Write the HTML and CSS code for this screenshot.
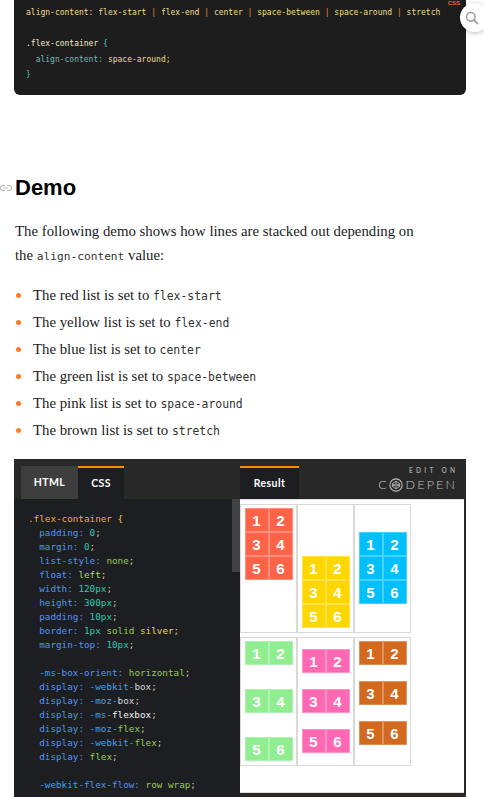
FILE: index.html
```
<!DOCTYPE html>
<html lang="en">
<head>
<meta charset="utf-8">
<title>align-content demo</title>
<link rel="stylesheet" href="styles.css">
</head>
<body>
<div class="code-block">
  <span class="lang">CSS</span>
<pre><span class="c1">align-content: flex-start <span class="bar">|</span> flex-end <span class="bar">|</span> center <span class="bar">|</span> space-between <span class="bar">|</span> space-around <span class="bar">|</span> stretch</span>

<span class="c2">.flex-container</span> <span class="c3">{</span>
  <span class="c3">align-content:</span> <span class="c1">space-around;</span>
<span class="c3">}</span></pre>
</div>
<div class="search">
  <svg width="14" height="14" viewBox="0 0 14 14"><circle cx="5.8" cy="5.8" r="4.3" fill="none" stroke="#a0a0a0" stroke-width="1.6"/><path d="M9 9l3.6 3.6" stroke="#a0a0a0" stroke-width="1.8" stroke-linecap="round"/></svg>
</div>

<h2 class="heading">
  <span class="anchor"><svg width="12" height="10" viewBox="0 0 12 10"><path d="M5 2.5H3a2.5 2.5 0 0 0 0 5h2M7 2.5h2a2.5 2.5 0 0 1 0 5H7M3.8 5h4.4" fill="none" stroke="#b5b5b5" stroke-width="1.1"/></svg></span>
  <span>Demo</span>
</h2>

<p class="intro"><span class="line">The following demo shows how lines are stacked out depending on</span> <span class="line">the <code>align-content</code> value:</span></p>

<ul class="points">
  <li><span>The red list is set to <code>flex-start</code></span></li>
  <li><span>The yellow list is set to <code>flex-end</code></span></li>
  <li><span>The blue list is set to <code>center</code></span></li>
  <li><span>The green list is set to <code>space-between</code></span></li>
  <li><span>The pink list is set to <code>space-around</code></span></li>
  <li><span>The brown list is set to <code>stretch</code></span></li>
</ul>

<div class="pen">
  <div class="pen-bar">
    <div class="tabs">
      <span class="tab tab-html">HTML</span>
      <span class="tab tab-on">CSS</span>
    </div>
    <div class="tabs tabs-right">
      <span class="tab tab-on tab-result">Result</span>
      <div class="brand">
        <span class="edit-on">EDIT ON</span>
        <span class="codepen">C<svg width="14" height="14" viewBox="0 0 24 24"><circle cx="12" cy="12" r="10.5" fill="none" stroke="#bdbdbd" stroke-width="1.8"/><path d="M12 5.5L5.8 9.6v4.8L12 18.5l6.2-4.1V9.6L12 5.5zM12 18.5v-4.3M18.2 9.6L12 14.2 5.8 9.6M5.8 14.4L12 9.8l6.2 4.6M12 5.5v4.3" fill="none" stroke="#bdbdbd" stroke-width="1.5" stroke-linejoin="round"/></svg>DEPEN</span>
      </div>
    </div>
  </div>
  <div class="pen-body">
    <div class="code-pane">
<pre><span class="s">.flex-container</span> <span class="b">{</span>
  <span class="p">padding:</span> <span class="n">0</span><span class="sc">;</span>
  <span class="p">margin:</span> <span class="n">0</span><span class="sc">;</span>
  <span class="p">list-style:</span> <span class="k">none</span><span class="sc">;</span>
  <span class="p">float:</span> <span class="k2">left</span><span class="sc">;</span>
  <span class="p">width:</span> <span class="n">120px</span><span class="sc">;</span>
  <span class="p">height:</span> <span class="n">300px</span><span class="sc">;</span>
  <span class="p">padding:</span> <span class="n">10px</span><span class="sc">;</span>
  <span class="p">border:</span> <span class="n">1px</span> <span class="k">solid</span> <span class="y">silver</span><span class="sc">;</span>
  <span class="p">margin-top:</span> <span class="n">10px</span><span class="sc">;</span>

  <span class="v">-ms</span><span class="p">-box-orient:</span> <span class="k">horizontal</span><span class="sc">;</span>
  <span class="p">display:</span> <span class="v">-webkit-</span><span class="g">box</span><span class="sc">;</span>
  <span class="p">display:</span> <span class="v">-moz-</span><span class="g">box</span><span class="sc">;</span>
  <span class="p">display:</span> <span class="v">-ms-</span><span class="w">flexbox</span><span class="sc">;</span>
  <span class="p">display:</span> <span class="v">-moz-</span><span class="k">flex</span><span class="sc">;</span>
  <span class="p">display:</span> <span class="v">-webkit-</span><span class="k">flex</span><span class="sc">;</span>
  <span class="p">display:</span> <span class="k">flex</span><span class="sc">;</span>

  <span class="v">-webkit</span><span class="p">-flex-flow:</span> <span class="k">row wrap</span><span class="sc">;</span></pre>
      <div class="track"><div class="thumb"></div></div>
    </div>
    <div class="result-pane">
      <ul class="fc red start"><li>1</li><li>2</li><li>3</li><li>4</li><li>5</li><li>6</li></ul>
      <ul class="fc yellow end"><li>1</li><li>2</li><li>3</li><li>4</li><li>5</li><li>6</li></ul>
      <ul class="fc blue center"><li>1</li><li>2</li><li>3</li><li>4</li><li>5</li><li>6</li></ul>
      <ul class="fc green between"><li>1</li><li>2</li><li>3</li><li>4</li><li>5</li><li>6</li></ul>
      <ul class="fc pink around"><li>1</li><li>2</li><li>3</li><li>4</li><li>5</li><li>6</li></ul>
      <ul class="fc brown stretch"><li>1</li><li>2</li><li>3</li><li>4</li><li>5</li><li>6</li></ul>
    </div>
  </div>
</div>
</body>
</html>
```
FILE: styles.css
```
* { box-sizing: border-box; margin: 0; padding: 0; }

body {
  width: 484px;
  background: #fff;
  color: #1a1a1a;
  font-family: "Liberation Serif", serif;
  position: relative;
  overflow: hidden;
}

/* top code snippet */
.code-block {
  position: relative;
  margin-left: 14px;
  width: 452px;
  height: 95px;
  background: #1d1d1d;
  border-radius: 0 0 6px 6px;
  padding: 5.25px 12px 0;
}
.code-block pre {
  font-family: "DejaVu Sans Mono", monospace;
  font-size: 8px;
  line-height: 15.5px;
  color: #f0dc90;
}
.code-block .c1 { color: #f0dc90; }
.code-block .bar { color: #f08a2c; }
.code-block .c2 { color: #f4ecc8; }
.code-block .c3 { color: #4ccbb4; }
.lang {
  position: absolute;
  right: 6px;
  top: 0;
  font-family: "Liberation Sans", sans-serif;
  font-size: 6px;
  line-height: 6px;
  font-weight: bold;
  color: #ff5a1f;
}
.search {
  position: absolute;
  left: 460px;
  top: 3px;
  width: 29px;
  height: 29px;
  border-radius: 50%;
  background: #fff;
  box-shadow: 0 1px 5px rgba(0, 0, 0, 0.25);
  display: flex;
  align-items: center;
  padding-left: 5px;
}

/* heading */
.heading {
  margin-top: 78px;
  display: flex;
  align-items: center;
  height: 30px;
  font-family: "Liberation Sans", sans-serif;
  font-size: 22px;
  font-weight: bold;
  color: #000;
}
.anchor {
  width: 15px;
  display: flex;
  align-items: center;
}

.intro {
  margin-top: 16px;
  margin-left: 15px;
  width: 415px;
  font-size: 14.8px;
  line-height: 24px;
}
.intro .line {
  white-space: nowrap;
}
.intro code {
  font-size: 11.2px;
}
code {
  font-family: "DejaVu Sans Mono", monospace;
  font-size: 11.4px;
  line-height: 1;
  color: #333;
}

.points {
  list-style: none;
  margin-top: 14.5px;
  margin-left: 15.5px;
}
.points li {
  display: flex;
  align-items: center;
  height: 27px;
  font-size: 14.8px;
  line-height: 27px;
}
.points li::before {
  content: "";
  width: 5px;
  height: 5px;
  border-radius: 50%;
  background: #ff7a21;
  margin-right: 12.5px;
  flex: none;
}

/* codepen embed */
.pen {
  margin-top: 15px;
  margin-left: 14px;
  width: 452px;
  background: #2b2724;
}
.pen-bar {
  display: grid;
  grid-template-columns: 226px 226px;
  height: 40px;
  background: #282828;
}
.tabs {
  display: flex;
  align-items: flex-end;
  padding-left: 7px;
}
.tabs-right {
  padding-left: 0;
  padding-right: 11px;
  justify-content: space-between;
}
.tab {
  height: 33px;
  display: flex;
  align-items: center;
  justify-content: center;
  font-family: Lato, "Liberation Sans", sans-serif;
  font-weight: 700;
  font-size: 10.5px;
  letter-spacing: 0.4px;
  color: #fff;
}
.tab-html {
  width: 57px;
  background: #3e3e3e;
}
.tab-on {
  width: 46px;
  background: #1d1e22;
  border-top: 2px solid #ff8a00;
  padding-bottom: 1px;
}
.tab-result {
  width: 59px;
}
.brand {
  align-self: stretch;
  display: flex;
  flex-direction: column;
  align-items: flex-end;
  padding-top: 8px;
  color: #b8b8b8;
  font-family: Lato, "Liberation Sans", sans-serif;
}
.edit-on {
  font-size: 6.5px;
  font-weight: 700;
  letter-spacing: 3.3px;
  margin-right: -3.3px;
  line-height: 8px;
  color: #a0a0a0;
}
.codepen {
  margin-top: 3px;
  display: flex;
  align-items: center;
  font-size: 12.5px;
  font-weight: 300;
  letter-spacing: 2.2px;
  line-height: 14px;
  margin-right: -2.2px;
  color: #c4c4c4;
}
.codepen svg {
  margin: 0 2.5px 0 0;
}

.pen-body {
  display: grid;
  grid-template-columns: 226px 224px;
  height: 300px;
}
.code-pane {
  background: #1d1e22;
  display: flex;
}
.code-pane pre {
  flex: 1;
  padding: 13px 0 0 14px;
  font-family: "DejaVu Sans Mono", monospace;
  font-size: 9.3px;
  line-height: 14px;
  color: #c8c8c8;
}
.track {
  width: 8px;
  flex: none;
}
.thumb {
  height: 73px;
  background: #414247;
}
.p { color: #5292f4; }
.n { color: #2fc6ae; }
.k { color: #94cc50; }
.k2 { color: #add85e; }
.s { color: #f0aa3c; }
.b { color: #e8cb3e; }
.sc { color: #cfcca0; }
.v { color: #2ea2ff; }
.g { color: #d4d4d4; }
.w { color: #f4f4f4; }
.y { color: #ead452; }

.result-pane {
  background: #fff;
  height: 294px;
  border-top: 1px solid #dedede;
  border-bottom: 1px solid #dedede;
  display: flex;
  flex-wrap: wrap;
  align-content: flex-start;
}
.fc {
  list-style: none;
  width: 57px;
  height: 129px;
  padding: 3.5px;
  border: 1px solid #d9d9d9;
  margin-top: 4px;
  display: flex;
  flex-wrap: wrap;
}
.fc li {
  width: 24px;
  height: 24px;
  display: flex;
  align-items: center;
  justify-content: center;
  color: #fff;
  font-family: "Liberation Sans", sans-serif;
  font-weight: bold;
  font-size: 15px;
  border: 1px solid rgba(255, 255, 255, 0.28);
}
.start { align-content: flex-start; }
.end { align-content: flex-end; }
.center { align-content: center; }
.between { align-content: space-between; }
.around { align-content: space-around; }
.stretch { align-content: stretch; }
.red li { background: #ff6347; }
.yellow li { background: #ffd700; }
.blue li { background: #00bfff; }
.green li { background: #90ee90; }
.pink li { background: #ff69b4; }
.brown li { background: #d2691e; }
```
